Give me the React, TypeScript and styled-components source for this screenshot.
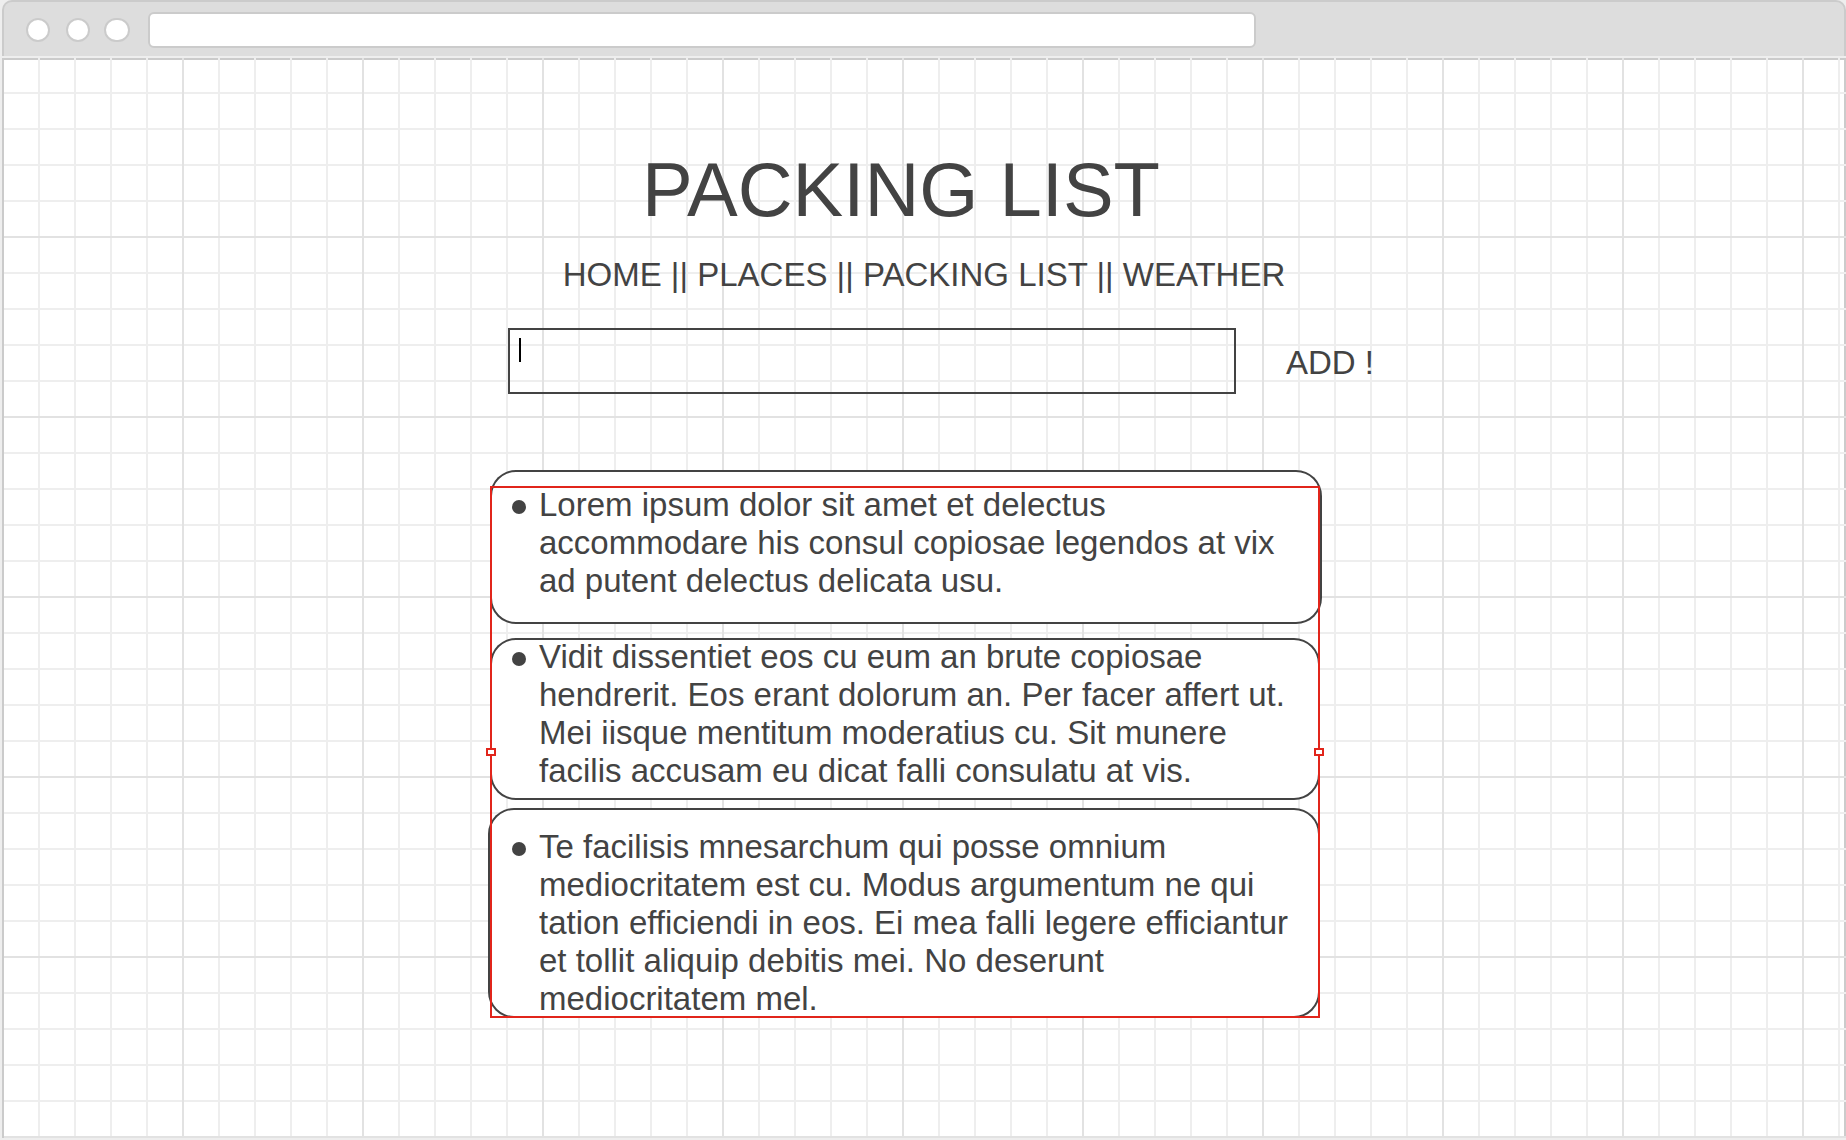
import React, { Fragment } from "react";
import styled, { createGlobalStyle } from "styled-components";

const ink = "#434343";
const frame = "#cbcbcb";
const minor = "#eeeeee";
const major = "#e2e2e2";
const accent = "#e1251b";

const GlobalStyle = createGlobalStyle`
  *, *::before, *::after { box-sizing: border-box; }
  body {
    margin: 0;
    background: #eeeeee;
    color: ${ink};
    font: 33px/38px "Liberation Sans", Arial, sans-serif;
  }
`;

const Browser = styled.div`
  display: flex;
  flex-direction: column;
  gap: 2px;
  min-height: 100vh;
  padding: 0 0 2px 2px;
`;

const Toolbar = styled.header`
  display: flex;
  align-items: center;
  gap: 18px;
  height: 56px;
  padding: 2px 22px 0;
  background: #dddddd;
  border: 2px solid ${frame};
  border-bottom: 0;
  border-radius: 10px 10px 0 0;
`;

const Dots = styled.div`
  display: grid;
  grid-template-columns: 40px 38px 26px;
`;

const Dot = styled.span<{ $wide?: boolean }>`
  width: ${(p) => (p.$wide ? 26 : 24)}px;
  height: 24px;
  background: #ffffff;
  border: 2px solid ${frame};
  border-radius: 12px;
`;

const Address = styled.input`
  flex: 0 1 1108px;
  min-width: 0;
  height: 36px;
  padding: 0 12px;
  background: #ffffff;
  border: 2px solid ${frame};
  border-radius: 6px;
  font: 18px "Liberation Sans", Arial, sans-serif;
  outline: 0;
`;

/* Graph paper: the frame edges are painted beneath the grid lines. */
const Canvas = styled.main`
  flex: 1;
  padding: 88px 24px 24px;
  background:
    linear-gradient(${frame}, ${frame}) 0 0 / 2px 100% no-repeat,
    repeating-linear-gradient(to right, ${major} 0 2px, transparent 2px 180px),
    linear-gradient(${major} 2px, transparent 2px) 0 178px / 100% 180px,
    repeating-linear-gradient(to right, ${minor} 0 2px, transparent 2px 36px),
    linear-gradient(${minor} 2px, transparent 2px) 0 34px / 100% 36px,
    linear-gradient(${frame}, ${frame}) 0 0 / 100% 2px no-repeat,
    linear-gradient(${frame}, ${frame}) 100% 0 / 2px 100% no-repeat,
    linear-gradient(#dedede, #dedede) 0 100% / 100% 2px no-repeat,
    #ffffff;
`;

const Sheet = styled.div`
  max-width: 900px;
  margin: 0 auto;
`;

const Title = styled.h1`
  margin: 0;
  padding-right: 46px;
  font-size: 76px;
  font-weight: 400;
  line-height: 88px;
  text-align: center;
`;

const Nav = styled.nav`
  margin-top: 22px;
  text-align: center;
`;

const NavLink = styled.a`
  color: inherit;
  text-decoration: none;
`;

const Form = styled.form`
  display: flex;
  align-items: center;
  justify-content: space-between;
  margin: 34px 0 0 34px;
`;

const Field = styled.div`
  position: relative;
  flex: 0 1 728px;
  height: 66px;
`;

const ItemInput = styled.input`
  width: 100%;
  height: 100%;
  padding: 0 12px;
  background: transparent;
  border: 2px solid ${ink};
  border-radius: 0;
  color: inherit;
  font: inherit;
  outline: 0;
`;

const Caret = styled.span`
  position: absolute;
  top: 10px;
  left: 11px;
  width: 2px;
  height: 24px;
  background: #000000;
`;

const AddButton = styled.button`
  padding: 4px 0 0;
  background: none;
  border: 0;
  color: inherit;
  font: inherit;
  white-space: nowrap;
`;

const Selection = styled.section`
  position: relative;
  max-width: 834px;
  margin: 76px 0 0 14px;
`;

const List = styled.ul`
  margin: 0;
  padding: 0;
  list-style: none;
`;

const Card = styled.li<{ $inset: string; $height: number; $top: number; $gap: number; $indent: number }>`
  display: grid;
  grid-template-columns: 14px 1fr;
  column-gap: 13px;
  align-items: start;
  min-height: ${(p) => p.$height}px;
  margin: ${(p) => p.$inset};
  margin-top: ${(p) => p.$gap}px;
  padding: ${(p) => p.$top}px 20px 0 ${(p) => p.$indent}px;
  background: #ffffff;
  border-radius: 26px;
  box-shadow: inset 0 0 0 2px ${ink};

  &::before {
    content: "";
    height: 14px;
    margin-top: 14px;
    background: ${ink};
    border-radius: 50%;
  }
`;

const Outline = styled.div`
  position: absolute;
  inset: 16px 2px 0;
  border: 2px solid ${accent};
  pointer-events: none;
`;

const Handle = styled.span<{ $side: "left" | "right" }>`
  position: absolute;
  top: calc(50% - 4px);
  ${(p) => p.$side}: -6px;
  width: 10px;
  height: 8px;
  background: #ffffff;
  border: 2px solid ${accent};
`;

const links = ["HOME", "PLACES", "PACKING LIST", "WEATHER"];

const items = [
  {
    text: "Lorem ipsum dolor sit amet et delectus accommodare his consul copiosae legendos at vix ad putent delectus delicata usu.",
    inset: "0 0 0 2px", height: 154, top: 16, gap: 0, indent: 22,
  },
  {
    text: "Vidit dissentiet eos cu eum an brute copiosae hendrerit. Eos erant dolorum an. Per facer affert ut. Mei iisque mentitum moderatius cu. Sit munere facilis accusam eu dicat falli consulatu at vis.",
    inset: "0 2px 0 2px", height: 162, top: 0, gap: 14, indent: 22,
  },
  {
    text: "Te facilisis mnesarchum qui posse omnium mediocritatem est cu. Modus argumentum ne qui tation efficiendi in eos. Ei mea falli legere efficiantur et tollit aliquip debitis mei. No deserunt mediocritatem mel.",
    inset: "0 2px 0 0", height: 210, top: 20, gap: 8, indent: 24,
  },
];

export default function App() {
  return (
    <>
      <GlobalStyle />
      <Browser>
        <Toolbar>
          <Dots>
            <Dot />
            <Dot />
            <Dot $wide />
          </Dots>
          <Address type="text" aria-label="Address" />
        </Toolbar>
        <Canvas>
          <Sheet>
            <Title>PACKING LIST</Title>
            <Nav>
              {links.map((link, i) => (
                <Fragment key={link}>
                  {i > 0 && " || "}
                  <NavLink href="#">{link}</NavLink>
                </Fragment>
              ))}
            </Nav>
            <Form onSubmit={(e) => e.preventDefault()}>
              <Field>
                <ItemInput type="text" aria-label="New item" />
                <Caret />
              </Field>
              <AddButton type="submit">ADD !</AddButton>
            </Form>
            <Selection>
              <List>
                {items.map((item) => (
                  <Card
                    key={item.text}
                    $inset={item.inset}
                    $height={item.height}
                    $top={item.top}
                    $gap={item.gap}
                    $indent={item.indent}
                  >
                    <span>{item.text}</span>
                  </Card>
                ))}
              </List>
              <Outline>
                <Handle $side="left" />
                <Handle $side="right" />
              </Outline>
            </Selection>
          </Sheet>
        </Canvas>
      </Browser>
    </>
  );
}
